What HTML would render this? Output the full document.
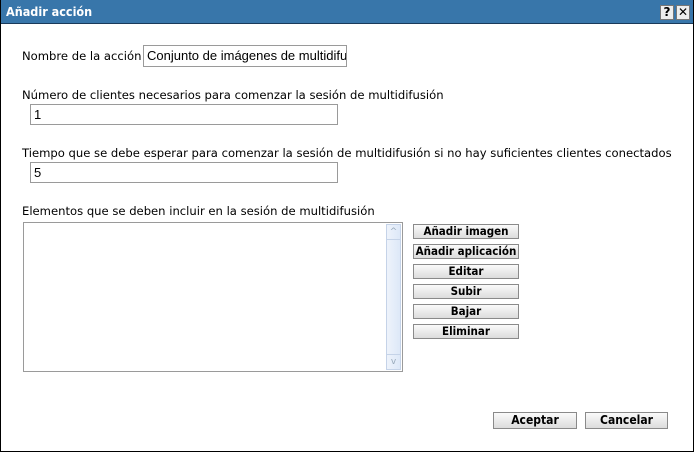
<!DOCTYPE html>
<html><head><meta charset="utf-8"><style>
*{margin:0;padding:0;box-sizing:border-box}
body{width:694px;height:452px;background:#fff;font-family:"DejaVu Sans","Liberation Sans",sans-serif;font-size:11px;color:#000;position:relative;overflow:hidden}
.frame{position:absolute;left:0;top:0;width:694px;height:452px;border:1px solid #000;border-top:none}
.title{position:absolute;left:0;top:0;width:694px;height:24px;background:#3876aa;border-bottom:1px solid #1a3a5a;color:#fff;font-weight:bold;font-size:12.5px;line-height:24px;padding-left:6px;font-family:"DejaVu Sans Condensed","DejaVu Sans",sans-serif}
.tb{position:absolute;top:5px;width:14px;height:15px;background:#eee;border:1px solid #777;color:#000;font-size:12px;line-height:13px;text-align:center;font-weight:bold}
.lbl{position:absolute;white-space:nowrap;font-size:11.6px}
.inp{position:absolute;border:1px solid #9a9a9a;background:#fff;font-size:13px;padding-left:3px;line-height:19px;overflow:hidden;white-space:nowrap;font-family:"Liberation Sans",sans-serif}
.btn{position:absolute;height:15px;border:1px solid #8a8a8a;background:linear-gradient(#fafafa,#dcdcdc);font-weight:bold;font-size:11.5px;text-align:center;line-height:13px;white-space:nowrap;font-family:"DejaVu Sans Condensed","DejaVu Sans",sans-serif}
</style></head><body>
<div class="title">Añadir acción</div>
<div class="tb" style="left:660px">?</div>
<div class="tb" style="left:676px;font-weight:normal">✕</div>
<div class="frame"></div>
<div class="lbl" style="left:22px;top:49px">Nombre de la acción</div>
<div class="inp" style="left:143px;top:45px;width:204px;height:22px">Conjunto de imágenes de multidifusión</div>
<div class="lbl" style="left:22px;top:88px">Número de clientes necesarios para comenzar la sesión de multidifusión</div>
<div class="inp" style="left:30px;top:104px;width:308px;height:21px">1</div>
<div class="lbl" style="left:22px;top:146px">Tiempo que se debe esperar para comenzar la sesión de multidifusión si no hay suficientes clientes conectados</div>
<div class="inp" style="left:30px;top:162px;width:308px;height:21px">5</div>
<div class="lbl" style="left:22px;top:204px">Elementos que se deben incluir en la sesión de multidifusión</div>
<div style="position:absolute;left:23px;top:222px;width:380px;height:150px;border:1px solid #9a9a9a;background:#fff"></div>
<div style="position:absolute;left:386px;top:224px;width:15px;height:146px;background:linear-gradient(90deg,#eef3fb,#dde8f8);border:1px solid #c5d3e8"></div>
<div style="position:absolute;left:386px;top:224px;width:15px;height:16px;border:1px solid #c5d3e8;color:#9ab;font-size:9px;text-align:center;line-height:14px">^</div>
<div style="position:absolute;left:386px;top:354px;width:15px;height:16px;border:1px solid #c5d3e8;color:#9ab;font-size:9px;text-align:center;line-height:14px">v</div>
<div class="btn" style="left:413px;top:224px;width:106px">Añadir imagen</div>
<div class="btn" style="left:413px;top:244px;width:106px">Añadir aplicación</div>
<div class="btn" style="left:413px;top:264px;width:106px">Editar</div>
<div class="btn" style="left:413px;top:284px;width:106px">Subir</div>
<div class="btn" style="left:413px;top:304px;width:106px">Bajar</div>
<div class="btn" style="left:413px;top:324px;width:106px">Eliminar</div>
<div class="btn" style="left:493px;top:412px;width:84px;height:17px;line-height:15px;font-size:12px">Aceptar</div>
<div class="btn" style="left:585px;top:412px;width:83px;height:17px;line-height:15px;font-size:12px">Cancelar</div>
</body></html>
